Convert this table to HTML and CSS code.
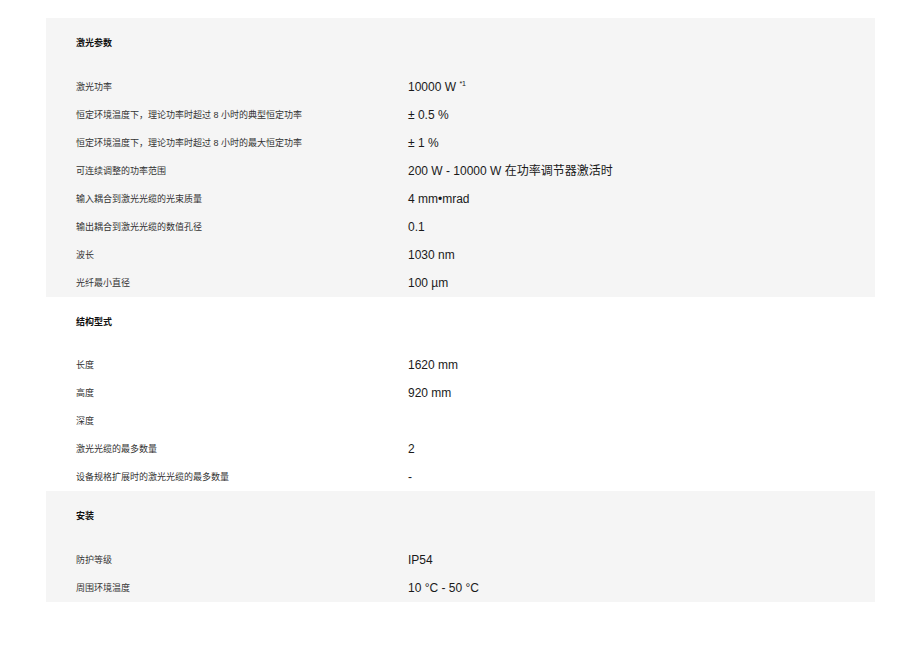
FILE: index.html
```html
<!DOCTYPE html>
<html lang="zh-CN">
  <head>
    <meta charset="UTF-8" />
    <meta name="viewport" content="width=device-width, initial-scale=1.0" />
    <title>技术参数</title>
    <link rel="stylesheet" href="styles.css">
  </head>
  <body>
    <div class="specs">
      <section class="spec-group shaded">
        <h3>激光参数</h3>
        <div class="spec-row"><span class="label">激光功率</span><span class="value">10000 W <sup>*1</sup></span></div>
        <div class="spec-row"><span class="label">恒定环境温度下，理论功率时超过 8 小时的典型恒定功率</span><span class="value">± 0.5 %</span></div>
        <div class="spec-row"><span class="label">恒定环境温度下，理论功率时超过 8 小时的最大恒定功率</span><span class="value">± 1 %</span></div>
        <div class="spec-row"><span class="label">可连续调整的功率范围</span><span class="value">200 W - 10000 W 在功率调节器激活时</span></div>
        <div class="spec-row"><span class="label">输入耦合到激光光缆的光束质量</span><span class="value">4 mm•mrad</span></div>
        <div class="spec-row"><span class="label">输出耦合到激光光缆的数值孔径</span><span class="value">0.1</span></div>
        <div class="spec-row"><span class="label">波长</span><span class="value">1030 nm</span></div>
        <div class="spec-row"><span class="label">光纤最小直径</span><span class="value">100 µm</span></div>
      </section>

      <section class="spec-group">
        <h3>结构型式</h3>
        <div class="spec-row"><span class="label">长度</span><span class="value">1620 mm</span></div>
        <div class="spec-row"><span class="label">高度</span><span class="value">920 mm</span></div>
        <div class="spec-row"><span class="label">深度</span><span class="value"></span></div>
        <div class="spec-row"><span class="label">激光光缆的最多数量</span><span class="value">2</span></div>
        <div class="spec-row"><span class="label">设备规格扩展时的激光光缆的最多数量</span><span class="value">-</span></div>
      </section>

      <section class="spec-group shaded">
        <h3>安装</h3>
        <div class="spec-row"><span class="label">防护等级</span><span class="value">IP54</span></div>
        <div class="spec-row"><span class="label">周围环境温度</span><span class="value">10 °C - 50 °C</span></div>
      </section>
    </div>
  </body>
</html>
```

FILE: styles.css
```css
body {
  margin: 0;
  background: #fff;
  font-family: "Liberation Sans", Arial, "Noto Sans CJK SC", sans-serif;
  color: #222;
}
.specs {
  width: 829px;
  margin: 18px 0 0 46px;
}
.spec-group {
  padding: 0 30px;
}
.spec-group.shaded {
  background-color: #f5f5f5;
}
.spec-group h3 {
  margin: 0;
  padding: 18px 0 21.5px;
  font-size: 9px;
  line-height: 15px;
  font-weight: bold;
  color: #111;
}
.spec-row {
  display: grid;
  grid-template-columns: 332px 1fr;
  align-items: center;
  height: 28px;
}
.label {
  font-size: 9px;
  line-height: 12px;
  color: #333;
}
.value {
  font-size: 12px;
  line-height: 14px;
  color: #1a1a1a;
}
.value sup {
  font-size: 7px;
  vertical-align: 5px;
  line-height: 0;
}
```
